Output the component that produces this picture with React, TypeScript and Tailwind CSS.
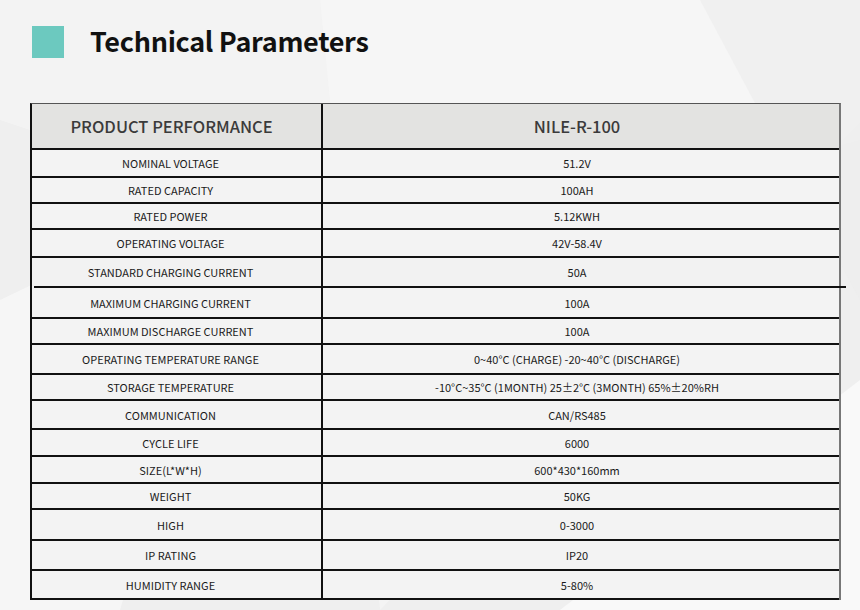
const rows: { label: string; value: string; h: number }[] = [
  { label: 'NOMINAL VOLTAGE', value: '51.2V', h: 28 },
  { label: 'RATED CAPACITY', value: '100AH', h: 26 },
  { label: 'RATED POWER', value: '5.12KWH', h: 26 },
  { label: 'OPERATING VOLTAGE', value: '42V-58.4V', h: 28 },
  { label: 'STANDARD CHARGING CURRENT', value: '50A', h: 30 },
  { label: 'MAXIMUM CHARGING CURRENT', value: '100A', h: 31 },
  { label: 'MAXIMUM DISCHARGE CURRENT', value: '100A', h: 26 },
  { label: 'OPERATING TEMPERATURE RANGE', value: '0~40°C (CHARGE) -20~40°C (DISCHARGE)', h: 30 },
  { label: 'STORAGE TEMPERATURE', value: '-10°C~35°C (1MONTH) 25±2°C (3MONTH) 65%±20%RH', h: 26 },
  { label: 'COMMUNICATION', value: 'CAN/RS485', h: 29 },
  { label: 'CYCLE LIFE', value: '6000', h: 27 },
  { label: 'SIZE(L*W*H)', value: '600*430*160mm', h: 27 },
  { label: 'WEIGHT', value: '50KG', h: 26 },
  { label: 'HIGH', value: '0-3000', h: 31 },
  { label: 'IP RATING', value: 'IP20', h: 30 },
  { label: 'HUMIDITY RANGE', value: '5-80%', h: 29 },
];

function Backdrop() {
  return (
    <svg className="absolute inset-0 h-full w-full" viewBox="0 0 860 610" preserveAspectRatio="none">
      <rect width="860" height="610" fill="#efefef" />
      <polygon points="0,0 860,0 860,140 420,260 0,120" fill="#f3f3f3" />
      <polygon points="320,0 980,0 380,610" fill="#f6f6f6" opacity="0.7" />
      <polygon points="0,300 250,180 120,610 0,610" fill="#f8f8f8" opacity="0.8" />
      <polygon points="560,610 860,380 860,610" fill="#f9f9f9" />
      <polygon points="700,0 860,0 860,300" fill="#ececec" opacity="0.6" />
    </svg>
  );
}

function Cells({ label, value }: { label: string; value: string }) {
  return (
    <>
      <div className="flex w-[291px] items-center justify-center border-r-2 border-r-[#111] pr-[12px] pt-[1px]">{label}</div>
      <div className="flex flex-1 items-center justify-center pr-[8px] pt-[1px]">{value}</div>
    </>
  );
}

export default function App() {
  return (
    <div
      className="relative h-[610px] w-[860px] overflow-hidden"
      style={{ fontFamily: '"Noto Sans CJK SC", "Noto Sans", sans-serif' }}
    >
      <Backdrop />
      <div className="relative flex flex-col">
        <div className="flex items-center pl-[32px] pt-[26px]">
          <div className="h-[32px] w-[32px] bg-[#6cc9bf]" />
          <h1 className="mb-[4px] ml-[26px] text-[27px] font-bold leading-none tracking-[-0.3px] text-[#111]">
            Technical Parameters
          </h1>
        </div>

        <div className="ml-[30px] mt-[45px] flex w-[811px] flex-col border-t border-t-[#555] border-l-2 border-l-[#111] border-r-2 border-r-[#777]">
          <div className="flex h-[46px] border-b-2 border-b-[#111] bg-[#e3e3e1] text-[16.5px] font-medium text-[#3b3b3b]">
            <div className="flex w-[291px] items-center justify-center border-r-2 border-r-[#111] pr-[10px]">
              PRODUCT PERFORMANCE
            </div>
            <div className="flex flex-1 items-center justify-center pr-[8px]">NILE-R-100</div>
          </div>
          {rows.map((r, i) =>
            i === 4 ? (
              <div key={r.label} className="flex flex-col">
                <div className="flex bg-[#f2f2f2] text-[11px] text-[#1a1a1a]" style={{ height: r.h - 2 }}>
                  <Cells label={r.label} value={r.value} />
                </div>
                <div className="ml-[2px] mr-[-7px] h-[2px] bg-[#111]" />
              </div>
            ) : (
              <div
                key={r.label}
                className="flex border-b-2 border-b-[#111] bg-[#f3f3f3] text-[11px] text-[#1a1a1a]"
                style={{ height: r.h }}
              >
                <Cells label={r.label} value={r.value} />
              </div>
            )
          )}
        </div>
      </div>
    </div>
  );
}
